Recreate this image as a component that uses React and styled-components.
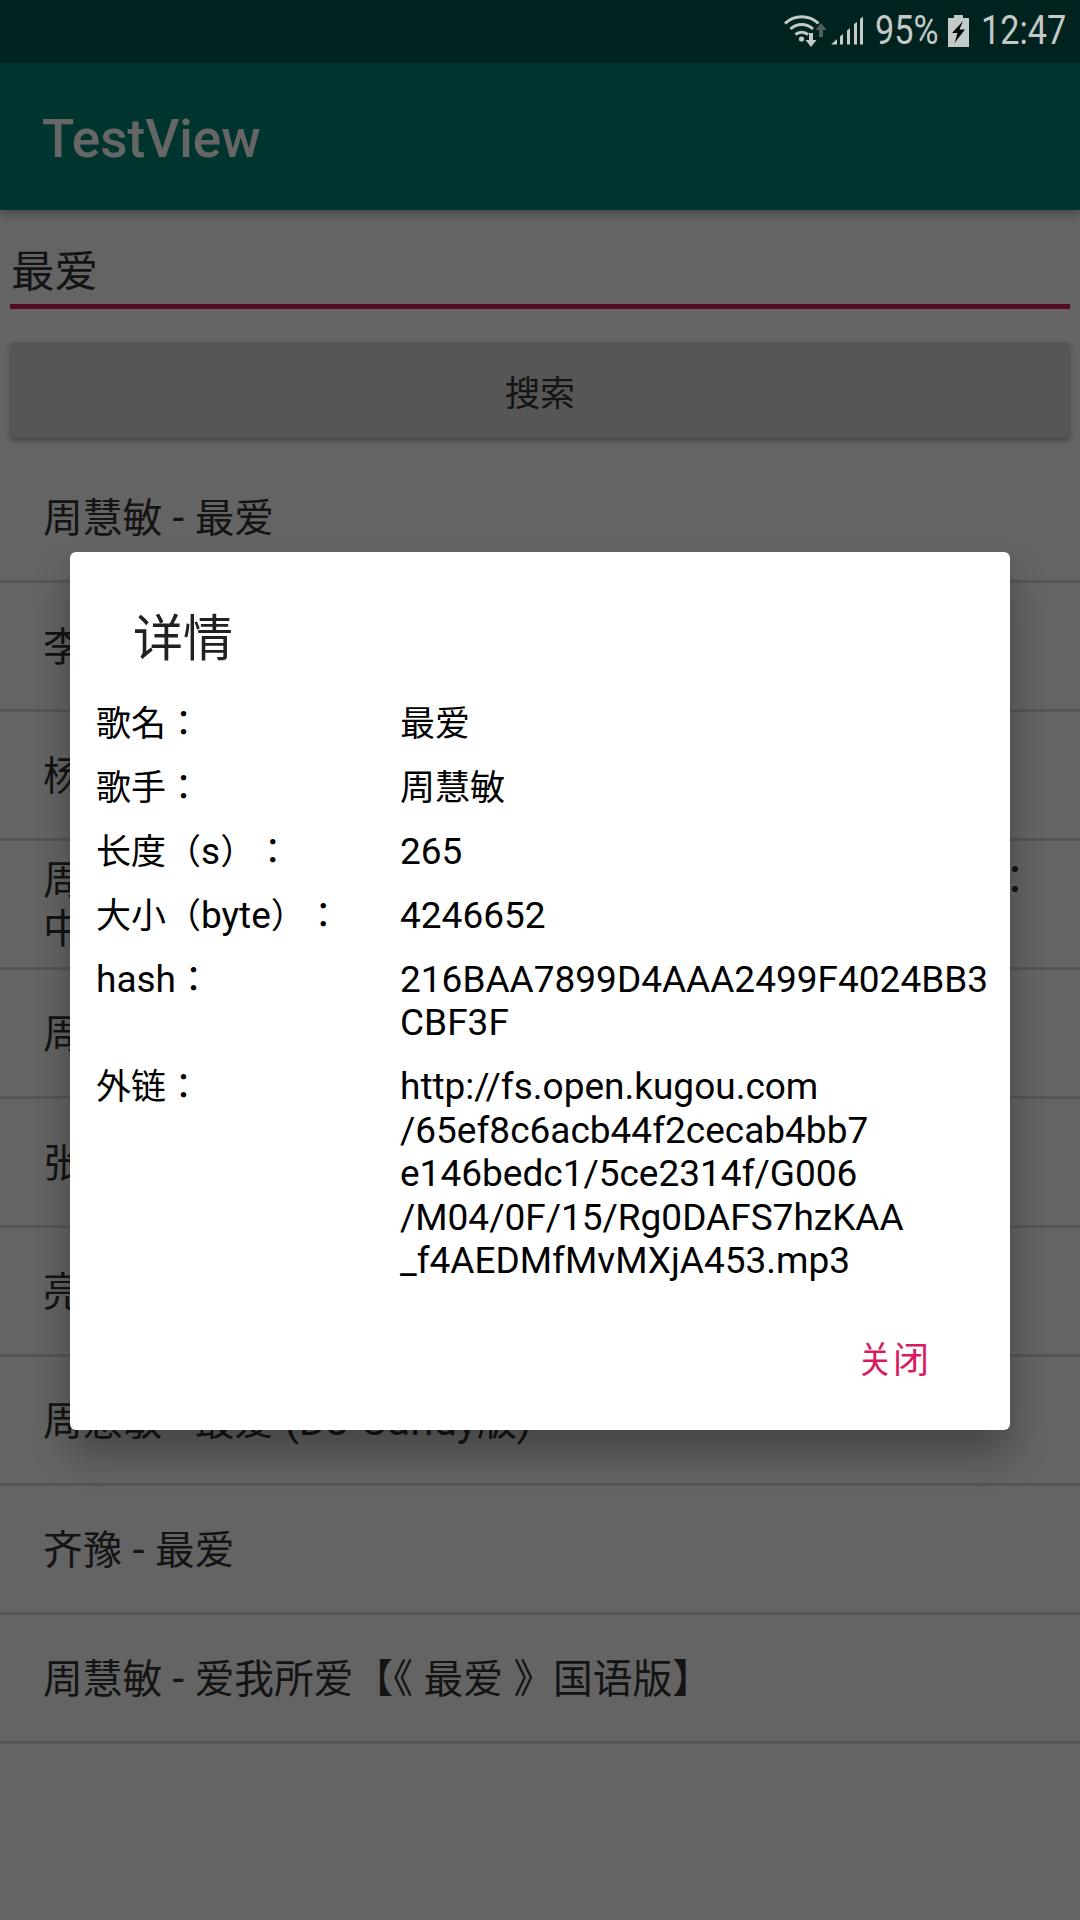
import React from 'react';
import styled, {createGlobalStyle} from 'styled-components';

const songs = [
    '周慧敏 - 最爱',
    '李玲玉 - 最爱',
    '杨钰莹 - 最爱',
    '周慧敏 - 最爱 (电影《流氓大亨》主题曲) 粤语版本Live：\n中文原声',
    '周慧敏 - 最爱',
    '张学友 - 最爱',
    '亮声open - 最爱',
    '周慧敏 - 最爱 (DJ Candy版)',
    '齐豫 - 最爱',
    '周慧敏 - 爱我所爱【《 最爱 》国语版】',
];

const details = [
    {label: '歌名：', value: '最爱'},
    {label: '歌手：', value: '周慧敏'},
    {label: '长度（s）：', value: '265'},
    {label: '大小（byte）：', value: '4246652'},
    {label: 'hash：', value: '216BAA7899D4AAA2499F4024BB3\nCBF3F'},
    {
        label: '外链：',
        value: 'http://fs.open.kugou.com\n/65ef8c6acb44f2cecab4bb7\ne146bedc1/5ce2314f/G006\n/M04/0F/15/Rg0DAFS7hzKAA\n_f4AEDMfMvMXjA453.mp3',
    },
];

// the CJK fallback on the device runs a bit smaller than the latin text
const Mixed = ({text}) => text.split(/([\x00-\x7f]+)/).map((part, i) =>
    i % 2 ? part : part && <Cjk key={i}>{part}</Cjk>
);

const WifiIcon = () => (
    <svg width="48" height="34" viewBox="0 0 48 34">
        <g fill="none" stroke="#c3cac8" strokeWidth="3">
            <path d="M2 9.500C11.500 .5 26 .5 35.500 9.500"/>
            <path d="M7.500 15C14 9 23.500 9 30 15"/>
            <path d="M12.500 20.500C16 17.500 21.500 17.500 25 20.500"/>
        </g>
        <circle cx="18.500" cy="25" r="2.600" fill="#c3cac8"/>
        <path d="M26 19h4v7h3.500l-5.500 7-5.500-7H26z" fill="#c3cac8"/>
        <path d="M36 23h4v-7h3.500l-5.500-7-5.500 7H36z" fill="#4f615d"/>
    </svg>
);

const SignalIcon = () => (
    <svg width="32" height="29" viewBox="0 0 32 29">
        <path d="M0 28.500L6 23v5.500z" fill="#c3cac8"/>
        <path d="M9 20.500l3-2.500v10.500H9z" fill="#c3cac8"/>
        <path d="M16 14.500l3-2.500v16.500h-3z" fill="#c3cac8"/>
        <path d="M23 8l3-2v22.500h-3z" fill="#c3cac8"/>
        <path d="M29 3l3-2.500v28h-3z" fill="#c3cac8"/>
    </svg>
);

const BatteryIcon = () => (
    <svg width="21" height="32" viewBox="0 0 21 32">
        <path d="M6 0h9v3h6v29H0V3h6z" fill="#c3cac8"/>
        <path d="M15 6L4 18h5.500L6.500 28 17 14.500h-5.500L15 6z" fill="#050a09"/>
    </svg>
);

const App = () => {
    return (
        <Page>
            <GlobalStyle/>
            <StatusBar>
                <WifiIcon/>
                <SignalIcon/>
                <StatusText $width={61}>95%</StatusText>
                <BatteryIcon/>
                <StatusText $width={84}>12:47</StatusText>
            </StatusBar>

            <Toolbar>TestView</Toolbar>

            <SearchInput><Mixed text="最爱"/></SearchInput>
            <SearchButton>搜索</SearchButton>

            <SongList>
                {songs.map((song, i) =>
                    <SongRow key={i}><SongName><Mixed text={song}/></SongName></SongRow>
                )}
            </SongList>

            <Scrim>
                <Dialog>
                    <DialogTitle>详情</DialogTitle>
                    <DetailList>
                        {details.map(item =>
                            <DetailRow key={item.label}>
                                <DetailText><Mixed text={item.label}/></DetailText>
                                <DetailText><Mixed text={item.value}/></DetailText>
                            </DetailRow>
                        )}
                    </DetailList>
                    <DialogActions>
                        <CloseButton>关闭</CloseButton>
                    </DialogActions>
                </Dialog>
            </Scrim>
        </Page>
    );
};

export default App;


const GlobalStyle = createGlobalStyle`
  html, body {
    margin: 0;
    padding: 0;
  }

  body {
    font-family: Roboto, "Noto Sans CJK JP", "Noto Sans CJK SC", sans-serif;
    text-spacing-trim: space-all;
  }

  * {
    box-sizing: border-box;
  }
`

const Page = styled.div`
  position: relative;
  width: 1080px;
  height: 1920px;
  overflow: hidden;
  background-color: #fafafa;
`

const Cjk = styled.span`
  font-size: 0.946em;
  line-height: 0;
`

const StatusBar = styled.div`
  position: relative;
  z-index: 2;
  display: flex;
  align-items: center;
  justify-content: flex-end;
  height: 63px;
  padding: 0 15px 2px 0;
  background-color: #012320;
  color: #c3cac8;
`

const StatusText = styled.span`
  display: inline-block;
  width: ${props => props.$width}px;
  margin-left: 12px;
  font-size: 40px;
  line-height: 44px;
  white-space: nowrap;
  transform: scaleX(0.855);
  transform-origin: left center;

  & + svg {
    margin-left: 12px;
  }
`

const Toolbar = styled.header`
  display: flex;
  align-items: center;
  height: 147px;
  padding: 5px 0 0 42px;
  background-color: #008577;
  box-shadow: 0 4px 10px rgba(0, 0, 0, 0.3);
  color: #fff;
  font-size: 53px;
  font-weight: 500;
`

const SearchInput = styled.div`
  height: 99px;
  margin: 0 10px;
  padding: 36px 1px 0;
  border-bottom: 5px solid #d81b60;
  color: #333;
  font-size: 46px;
  line-height: 50px;
`

const SearchButton = styled.div`
  display: flex;
  align-items: center;
  justify-content: center;
  height: 96px;
  margin: 33px 10px 0;
  border-radius: 4px;
  background-color: #d6d7d7;
  box-shadow: 0 3px 5px rgba(0, 0, 0, 0.3);
  color: #333;
  font-size: 35px;
`

const SongList = styled.ul`
  display: flex;
  flex-direction: column;
  margin: 16px 0 0;
  padding: 0;
  list-style: none;
`

const SongRow = styled.li`
  display: flex;
  align-items: center;
  height: 129px;
  padding: 0 43px;
  border-bottom: 3px solid #d8d8d8;
`

const SongName = styled.span`
  color: #333;
  font-size: 42px;
  line-height: 49px;
  white-space: pre;
  text-spacing-trim: normal;
`

const Scrim = styled.div`
  position: absolute;
  inset: 0;
  z-index: 1;
  display: flex;
  align-items: center;
  justify-content: center;
  padding-top: 61px;
  background-color: rgba(0, 0, 0, 0.6);
`

const Dialog = styled.section`
  width: 940px;
  height: 878px;
  padding: 0 20px 0 26px;
  border-radius: 6px;
  background-color: #fff;
  box-shadow: 0 24px 38px rgba(0, 0, 0, 0.3);
`

const DialogTitle = styled.h2`
  margin: 0;
  padding: 54px 0 0 37px;
  color: #212121;
  font-size: 50px;
  font-weight: 400;
  line-height: 66px;
`

const DetailList = styled.div`
  display: flex;
  flex-direction: column;
  gap: 20.5px;
  margin-top: 30px;
`

const DetailRow = styled.div`
  display: grid;
  grid-template-columns: 304px 1fr;
`

const DetailText = styled.span`
  color: #000;
  font-size: 37px;
  line-height: 43.5px;
  white-space: pre-line;
`

const DialogActions = styled.div`
  display: flex;
  justify-content: flex-end;
  margin-top: 54px;
  padding-right: 61px;
`

const CloseButton = styled.span`
  color: #d81b60;
  font-size: 36px;
  line-height: 48px;
`
